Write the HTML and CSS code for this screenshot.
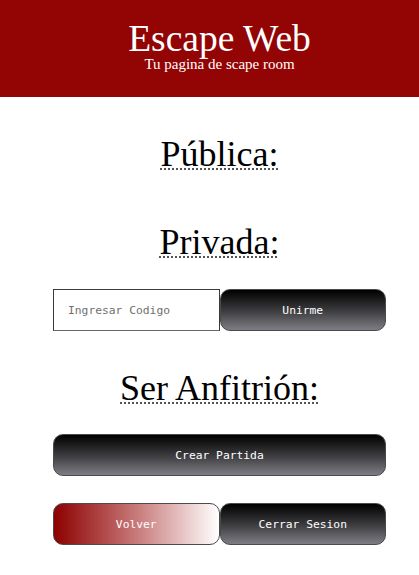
FILE: index.html
```html
<!DOCTYPE html>
<html lang="es">
<head>
<meta charset="utf-8">
<title>Escape Web</title>
<link rel="stylesheet" href="styles.css">
</head>
<body>
<header class="top">
  <h1 class="top-title">Escape Web</h1>
  <p class="top-sub">Tu pagina de scape room</p>
</header>
<main class="panel">
  <h2 class="section-title sec-publica"><abbr title="Partidas públicas">Pública:</abbr></h2>
  <h2 class="section-title sec-privada"><abbr title="Partidas privadas">Privada:</abbr></h2>
  <div class="row row-join">
    <input class="code-input" type="text" placeholder="Ingresar Codigo">
    <button class="btn btn-dark">Unirme</button>
  </div>
  <h2 class="section-title sec-host"><abbr title="Crear una partida">Ser Anfitrión:</abbr></h2>
  <div class="wide-wrap">
    <button class="btn btn-dark btn-wide">Crear Partida</button>
  </div>
  <div class="row row-bottom">
    <button class="btn btn-red">Volver</button>
    <button class="btn btn-dark">Cerrar Sesion</button>
  </div>
</main>
</body>
</html>
```
FILE: styles.css
```css
html, body {
  margin: 0;
  padding: 0;
  background: #ffffff;
}
body {
  font-family: "Liberation Serif", "Times New Roman", serif;
  color: #000;
}
.top {
  background: #930404;
  height: 97px;
  box-sizing: border-box;
  padding: 21px 0 0 20px;
  text-align: center;
  color: #ffffff;
}
.top-title {
  margin: 0;
  font-size: 37.5px;
  line-height: 35px;
  font-weight: normal;
}
.top-sub {
  margin: 0;
  font-size: 15px;
  line-height: 17px;
}
.panel {
  width: 333px;
  margin: 0 33px 0 53px;
  display: flex;
  flex-direction: column;
}
.section-title {
  margin: 0;
  font-size: 36px;
  line-height: 40px;
  font-weight: normal;
  text-align: center;
}
.section-title abbr {
  text-decoration: underline dotted;
  text-decoration-thickness: 2px;
  text-underline-offset: 2px;
  text-decoration-color: #555;
}
.btn {
  box-sizing: border-box;
  margin: 0;
  height: 42px;
  border: 1px solid #4a4a4a;
  border-radius: 10px;
  color: #ffffff;
  font-family: "DejaVu Sans Mono", "Liberation Mono", monospace;
  font-size: 11.3px;
  text-align: center;
  padding: 0;
  cursor: pointer;
}
.btn-dark {
  background: linear-gradient(to bottom, #000000 0%, #3a3a3d 50%, #7d7d84 100%);
}
.btn-red {
  background: linear-gradient(to right, #8d0000 0%, #c87a7a 50%, #ffffff 100%);
}
.sec-publica { margin-top: 37px; }
.sec-privada { margin-top: 48px; }
.row {
  display: grid;
  grid-template-columns: 1fr 1fr;
  height: 42px;
}
.row-join { margin-top: 27px; }
.sec-host { margin-top: 37px; }
.wide-wrap {
  margin-top: 26px;
  display: flex;
}
.btn-wide {
  flex: 1;
}
.row-bottom { margin-top: 27px; }
.code-input {
  box-sizing: border-box;
  height: 42px;
  width: 100%;
  margin: 0;
  border: 1px solid #3a3a3a;
  border-bottom-color: #666;
  padding: 0 0 0 14px;
  font-family: "DejaVu Sans Mono", "Liberation Mono", monospace;
  font-size: 11.3px;
  background: #fff;
  outline: none;
}
.code-input::placeholder {
  color: #6f6f6f;
}
```
